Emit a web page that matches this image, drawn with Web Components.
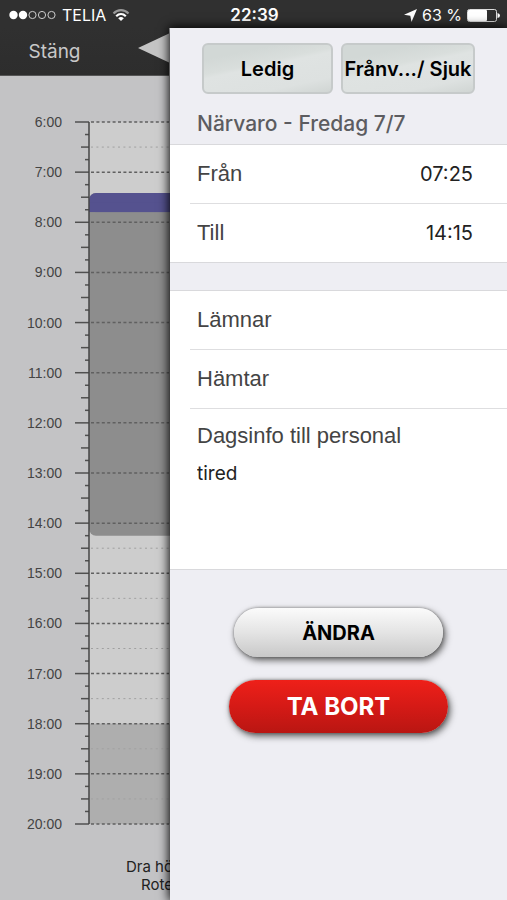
<!DOCTYPE html>
<html lang="sv">
<head>
<meta charset="utf-8">
<meta name="viewport" content="width=device-width, initial-scale=1">
<title>Närvaro</title>
<style>
  html, body { margin: 0; }
  body { font-family: Inter, "Liberation Sans", sans-serif; color: #111; background: #c3c3c5; }
</style>
</head>
<body>
<presence-app></presence-app>

<script>
const define = (name, html, setup) => {
  const tpl = document.createElement('template');
  tpl.innerHTML = html;
  customElements.define(name, class extends HTMLElement {
    constructor() {
      super();
      this.attachShadow({ mode: 'open' }).append(tpl.content.cloneNode(true));
    }
    connectedCallback() { if (setup) setup(this, this.shadowRoot); }
  });
};

define('status-bar', `
<style>
  :host { display: grid; grid-template-columns: 1fr auto 1fr; align-items: center; height: 28px; padding: 2px 7px 0 9px; box-sizing: border-box;
    background: #303030; color: #fff; font-size: 16px; line-height: 20px; }
  div { display: flex; align-items: center; gap: 6px; white-space: nowrap; }
  .end { justify-content: flex-end; gap: 5px; }
  time { font-weight: 600; font-size: 17px; }
  svg { display: block; flex: none; }
</style>
<div>
  <svg width="47" height="10" viewBox="0 0 47 10" aria-label="Signal">
    <g fill="#fff"><circle cx="4.5" cy="5" r="4.2"/><circle cx="14" cy="5" r="4.2"/></g>
    <g fill="none" stroke="#ccc" stroke-width="1"><circle cx="23.5" cy="5" r="3.6"/><circle cx="33" cy="5" r="3.6"/><circle cx="42.5" cy="5" r="3.6"/></g>
  </svg>
  <span>TELIA</span>
  <svg width="18" height="14" viewBox="0 0 18 14" aria-label="Wi-Fi">
    <g fill="none" stroke-width="2.2">
      <path d="M1.5 5.5C5.8 1.1 12.2 1.1 16.500 5.500" stroke="#999"/>
      <path d="M4.200 8.200C7 5.500 11 5.500 13.800 8.200" stroke="#fff"/>
    </g>
    <path d="M9 13L6.200 10.200Q9 8 11.800 10.200Z" fill="#fff"/>
  </svg>
</div>
<time>22:39</time>
<div class="end">
  <svg width="13" height="13" viewBox="0 0 13 13" aria-label="Plats"><path d="M13 0L7.500 13L6.300 6.800L0 5.800Z" fill="#fff"/></svg>
  <span>63 %</span>
  <svg width="33" height="13" viewBox="0 0 33 13" aria-label="Batteri">
    <rect x=".5" y=".5" width="29" height="12" rx="2" fill="none" stroke="#ddd"/>
    <rect x="1" y="1" width="19" height="11" rx="1" fill="#fff"/>
    <path d="M30.500 4Q33 4.500 33 6.500T30.500 9Z" fill="#fff"/>
  </svg>
</div>`);

define('nav-bar', `
<style>
  :host { display: flex; align-items: center; height: 48px; background: linear-gradient(#303030, #2d2d2d); border-bottom: 1px solid #555; box-sizing: border-box; overflow: hidden; }
  button { all: unset; flex: none; width: 109px; text-align: center; color: #c8c8c8; font-size: 19px; line-height: 24px; cursor: pointer; }
  svg { display: block; flex: none; margin: 0 0 8px 29px; }
</style>
<button type="button">Stäng</button>
<svg width="56" height="32" viewBox="0 0 56 32" aria-hidden="true"><path d="M0 16L34 0H56V32H34Z" fill="#c4c4c4"/></svg>`);

define('day-timeline', `
<style>
  :host { display: grid; grid-template-columns: 62px 1fr; column-gap: 13px; font-family: "Liberation Sans", Arial, sans-serif; font-size: 14px; color: #444; }
  ol { list-style: none; margin: 0; padding: 0; display: flex; flex-direction: column; text-align: right; }
  li { flex: 1; height: 0; }
  li:last-child { flex: none; }
  li span { display: block; line-height: 20px; margin-top: -10px; }
  svg { display: block; width: 100%; height: 100%; overflow: visible; }
</style>
<ol></ol>
<svg aria-hidden="true"></svg>`, (host, root) => {
  const from = 6, to = 20, total = (to - from) * 60;
  const pct = m => (m - from * 60) / total * 100 + '%';
  const span = (a, b) => (b - a) / total * 100 + '%';
  const start = 7 * 60 + 25, end = 14 * 60 + 15;
  let labels = '', lines = '';
  for (let m = from * 60; m <= to * 60; m += 15) {
    const y = pct(m), hour = m % 60 === 0, half = m % 30 === 0;
    if (hour) labels += `<li><span>${m / 60}:00</span></li>`;
    lines += `<line x1="${hour ? 0 : half ? 6 : 10}" x2="14" y1="${y}" y2="${y}" stroke="#505050" stroke-width="1.5"/>`;
    if (hour) lines += `<line x1="16" x2="100%" y1="${y}" y2="${y}" stroke="#606060" stroke-width="1.5" stroke-dasharray="3 2.4"/>`;
    else if (half && (m < start || m > end)) lines += `<line x1="16" x2="100%" y1="${y}" y2="${y}" stroke="#a0a0a0" stroke-dasharray="2 3.400"/>`;
  }
  root.querySelector('ol').innerHTML = labels;
  root.querySelector('svg').innerHTML = `
    <rect x="14" y="0" width="100%" height="${span(360, 1080)}" fill="#cdcdcd"/>
    <rect x="14" y="${pct(1080)}" width="100%" height="${span(1080, 1200)}" fill="#aeaeae"/>
    <rect x="14" y="${pct(start)}" width="100%" height="${span(start, end)}" rx="7" fill="#8d8d8d"/>
    <rect x="14" y="${pct(start)}" width="100%" height="${span(start, start + 23)}" rx="7" fill="#55528f"/>
    <rect x="14" y="${pct(start + 11)}" width="100%" height="${span(start + 11, start + 23)}" fill="#55528f"/>
    <rect x="14" y="${pct(start + 23)}" width="100%" height="${span(start + 23, start + 40)}" fill="#8d8d8d"/>
    ${lines}
    <line x1="14" x2="14" y1="0" y2="100%" stroke="#444" stroke-width="1.5"/>`;
});

define('glass-button', `
<style>
  :host { display: block; min-width: 0; }
  button { width: 100%; height: 51px; padding: 0; box-sizing: border-box; border: 2px solid #c6caca; border-radius: 6px; color: #000;
    font: 600 20px/24px Inter, "Liberation Sans", sans-serif; white-space: nowrap; cursor: pointer;
    background: linear-gradient(168deg, #d2d8d6 0 20%, #d9dedc 40%, #dfe3e2 46%, #dde1e0 80%, #d0d5d3); }
</style>
<button type="button"><slot></slot></button>`);

define('pill-button', `
<style>
  :host { display: block; width: 209px; }
  :host([danger]) { width: 219px; }
  button { width: 100%; height: 49px; padding: 0; border: 0; border-radius: 27px; color: #000; cursor: pointer;
    font: 700 20px/24px Inter, "Liberation Sans", sans-serif;
    background: linear-gradient(#fbfbfb, #e4e4e4 50%, #c8c8c8); box-shadow: 2px 3px 7px #555, 0 0 3px #888; }
  :host([danger]) button { height: 53px; color: #fff; font-size: 24px; background: linear-gradient(#ee2019, #d51a16 50%, #b91612); }
</style>
<button type="button"><slot></slot></button>`);

define('form-group', `
<style>
  :host { display: block; background: #fff; border: solid #d9d9dc; border-width: 1px 0; }
</style>
<slot></slot>`);

define('form-row', `
<style>
  :host { display: block; }
  div { display: flex; align-items: center; height: 58px; padding: 0 34px 0 27px; }
  :host(:not([first])) div { border-top: 1px solid #dedee0; margin-left: 20px; padding-left: 7px; }
  label { font: 22px/26px "Liberation Sans", Arial, sans-serif; color: #444; }
  input { flex: 1; min-width: 0; border: 0; padding: 0; background: none; outline: 0; text-align: right; font: 20px/24px Inter, sans-serif; color: #222; }
</style>
<div><label for="field"></label><input id="field" type="text"></div>`, (host, root) => {
  root.querySelector('label').textContent = host.getAttribute('label');
  root.querySelector('input').value = host.getAttribute('value') || '';
});

define('note-field', `
<style>
  :host { display: block; }
  div { display: flex; flex-direction: column; gap: 13px; height: 161px; box-sizing: border-box; border-top: 1px solid #dedee0; margin-left: 20px; padding: 14px 34px 8px 7px; }
  label { font: 22px/26px "Liberation Sans", Arial, sans-serif; color: #444; }
  textarea { flex: 1; border: 0; padding: 0; resize: none; outline: 0; background: none; font: 19px/24px Inter, sans-serif; color: #222; }
</style>
<div><label for="note"></label><textarea id="note"></textarea></div>`, (host, root) => {
  root.querySelector('label').textContent = host.getAttribute('label');
  root.querySelector('textarea').value = host.getAttribute('value') || '';
});

define('presence-panel', `
<style>
  :host { display: flex; flex-direction: column; background: #eeeef3; box-shadow: 0 0 10px 1px #000; }
  .quick { display: grid; grid-template-columns: 1fr minmax(0, 134px); gap: 8px; padding: 15px 32px 0; }
  h1 { margin: 0; padding: 16px 27px 7px; font: 500 21px/27px Inter, "Liberation Sans", sans-serif; color: #5c5c60; white-space: nowrap; }
  form-group + form-group { margin-top: 27px; }
  .actions { display: flex; flex-direction: column; align-items: center; gap: 23px; padding: 38px 0 24px; }
</style>
<div class="quick"><glass-button>Ledig</glass-button><glass-button>Frånv.../ Sjuk</glass-button></div>
<h1>Närvaro - Fredag 7/7</h1>
<form-group>
  <form-row first label="Från" value="07:25"></form-row>
  <form-row label="Till" value="14:15"></form-row>
</form-group>
<form-group>
  <form-row first label="Lämnar"></form-row>
  <form-row label="Hämtar"></form-row>
  <note-field label="Dagsinfo till personal" value="tired"></note-field>
</form-group>
<div class="actions"><pill-button>ÄNDRA</pill-button><pill-button danger>TA BORT</pill-button></div>`);

define('presence-app', `
<style>
  :host { display: grid; grid-template: auto 1fr / 1fr 2fr; min-height: 100vh; overflow: hidden; }
  status-bar { grid-area: 1 / 1 / 2 / 3; }
  .day { grid-area: 2 / 1 / 3 / 2; display: flex; flex-direction: column; min-width: 0; background: #c3c3c5; }
  day-timeline { flex: 1; margin-top: 46px; }
  p { margin: 0; padding: 34px 0 6px 126px; height: 36px; font-size: 15px; line-height: 18px; color: #222; white-space: nowrap; }
  p span { display: block; }
  p span + span { padding-left: 15px; }
  presence-panel { grid-area: 2 / 2 / 3 / 3; min-width: 0; margin-left: 1px; position: relative; }
</style>
<status-bar></status-bar>
<div class="day">
  <nav-bar></nav-bar>
  <day-timeline></day-timeline>
  <p><span>Dra hö</span><span>Rote</span></p>
</div>
<presence-panel></presence-panel>`);
</script>
</body>
</html>
